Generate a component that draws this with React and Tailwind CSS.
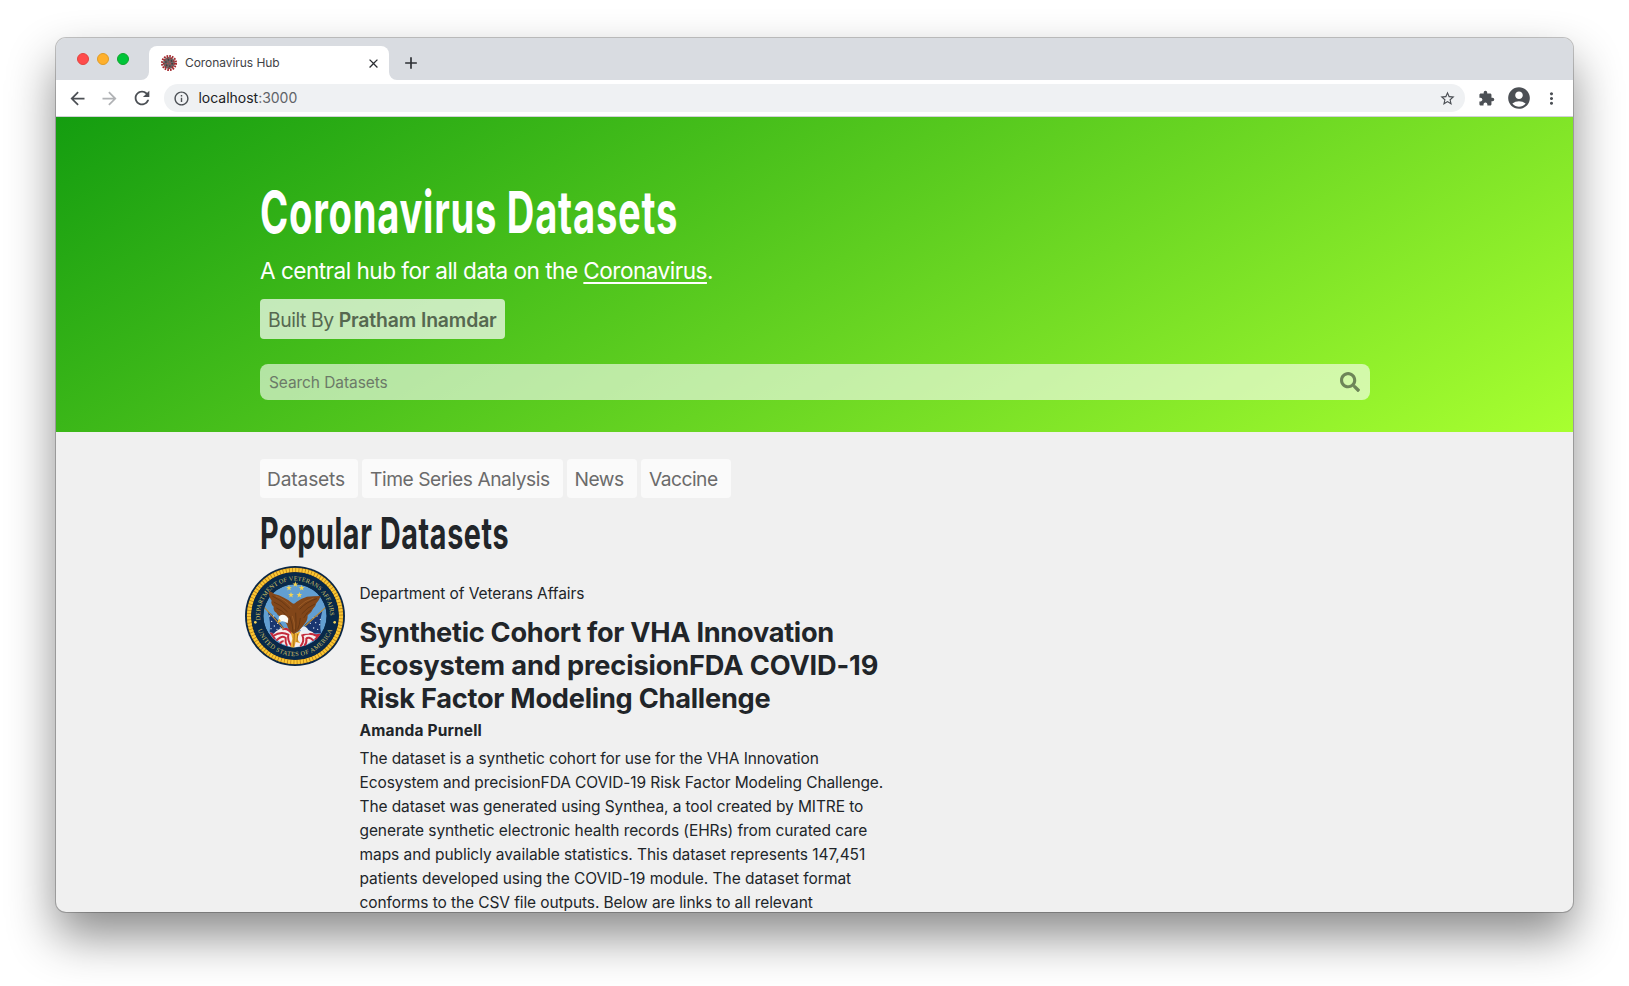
import React from "react";
import {
  MdAccountCircle, MdAdd, MdArrowBack, MdArrowForward, MdClose, MdExtension,
  MdInfoOutline, MdMoreVert, MdRefresh, MdStarBorder,
} from "react-icons/md";
import { FaSearch } from "react-icons/fa";

const description = [
  ["The dataset is a synthetic cohort for use for the VHA Innovation", "tracking-[-0.095px]"],
  ["Ecosystem and precisionFDA COVID-19 Risk Factor Modeling Challenge.", "tracking-[-0.094px]"],
  ["The dataset was generated using Synthea, a tool created by MITRE to", "tracking-[-0.098px]"],
  ["generate synthetic electronic health records (EHRs) from curated care", "tracking-[-0.086px]"],
  ["maps and publicly available statistics. This dataset represents 147,451", "tracking-[-0.059px]"],
  ["patients developed using the COVID-19 module. The dataset format", "tracking-[-0.04px]"],
  ["conforms to the CSV file outputs. Below are links to all relevant", "tracking-[-0.098px]"],
];

const tabs = [
  ["Datasets", "w-[98px] pl-[7px] tracking-[-0.16px]"],
  ["Time Series Analysis", "w-[201px] pl-[8px] tracking-[-0.45px]"],
  ["News", "w-[70px] pl-[7.5px] tracking-[-0.5px]"],
  ["Vaccine", "w-[90px] pl-[8px] tracking-[-0.5px]"],
];

const sealStars = [[151, 55], [132, 66], [170, 66], [138, 87], [163, 87]];
const flagStars = [
  [74, 150], [80, 166], [88, 180], [86, 150], [96, 190], [98, 172], [78, 188], [106, 186],
  [205, 156], [216, 150], [226, 160], [212, 170], [224, 176], [206, 186], [218, 190], [196, 172],
];

function Favicon() {
  return (
    <svg viewBox="0 0 32 32" className="size-4 shrink-0">
      <circle cx="16" cy="16" r="14" fill="none" stroke="#a3282d" strokeWidth="4" strokeDasharray="3.4 2.1" />
      <circle cx="16" cy="16" r="12" fill="#6d6061" />
      <circle cx="16" cy="16" r="10.6" fill="none" stroke="#a5292d" strokeWidth="3" strokeDasharray="3 4.4" />
      <circle cx="16" cy="16" r="6.4" fill="none" stroke="#413c3d" strokeWidth="3" strokeDasharray="3 3.7" />
      <circle cx="16" cy="16" r="3" fill="none" stroke="#b04a4c" strokeWidth="2.4" strokeDasharray="2.4 3.9" />
    </svg>
  );
}

function Seal() {
  return (
    <svg viewBox="0 0 300 300" className="size-[100px] shrink-0">
      <defs>
        <path id="arcTop" d="M46.4 166 A105 105 0 1 1 253.6 166" />
        <path id="arcBottom" d="M33 173 A119 119 0 0 0 267 173" />
        <clipPath id="disc"><circle cx="150" cy="150" r="95" /></clipPath>
      </defs>
      <circle cx="150" cy="150" r="150" fill="#0a2747" />
      <circle cx="150" cy="150" r="138" fill="none" stroke="#b8801c" strokeWidth="13" />
      <circle cx="150" cy="150" r="138" fill="none" stroke="#fbc733" strokeWidth="12" strokeDasharray="7.2 2.4" />
      <circle cx="150" cy="150" r="131" fill="#08294a" />
      <g fill="#d6c466" className="font-['Liberation_Serif',serif] font-normal" fontSize="19">
        <text textLength="344"><textPath href="#arcTop" startOffset="3" textLength="344">DEPARTMENT OF VETERANS AFFAIRS</textPath></text>
        <text textLength="290"><textPath href="#arcBottom" startOffset="20" textLength="290">UNITED STATES OF AMERICA</textPath></text>
      </g>
      <circle cx="31" cy="169" r="4" fill="#f0d25a" />
      <circle cx="269" cy="169" r="4" fill="#f0d25a" />
      <g clipPath="url(#disc)">
        <circle cx="150" cy="150" r="95" fill="#629fd2" />
        {/* flags */}
        <path d="M68 136 Q92 150 120 190 L102 216 Q84 198 74 198 Q78 168 68 136 Z" fill="#1a3670" />
        <path d="M232 136 Q206 152 178 178 L196 206 Q214 198 228 202 Q222 168 232 136 Z" fill="#1a3670" />
        <path d="M74 200 Q84 196 94 214 L88 222Z M228 204 Q214 200 202 214 L214 224Z" fill="#c32a3c" />
        {flagStars.map(([x, y]) => <circle key={`${x}-${y}`} cx={x} cy={y} r="2.1" fill="#dce6f2" />)}
        <path d="M84 206 Q104 182 124 186 L150 202 L180 190 Q208 196 214 212 Q192 240 150 244 Q106 240 84 206Z" fill="#f6eeee" />
        <g fill="none" stroke="#c32a3c" strokeWidth="6">
          <path d="M84 210 Q108 194 130 206 Q126 222 140 240" />
          <path d="M94 224 Q112 206 122 216 Q120 230 126 240" />
          <path d="M112 190 Q128 184 142 204" />
          <path d="M104 234 Q110 224 116 226" />
          <path d="M216 210 Q194 198 172 208 Q180 224 166 242" />
          <path d="M206 224 Q190 210 184 218 Q186 230 178 240" />
        </g>
        {/* flag poles */}
        <path d="M58 124 L118 190 M242 124 L180 180" stroke="#b98a35" strokeWidth="3.5" />
        {/* talons and arrows */}
        <path d="M137 196 L152 202 L166 196 L156 218 L166 232 L152 228 L146 252 L136 244 L142 218Z" fill="#e9ae34" />
        <path d="M148 202 L146 242 M158 204 L156 228" stroke="#a86d17" strokeWidth="3" />
        {/* tail */}
        <path d="M164 190 Q172 176 186 186 L196 200 Q186 206 174 202Z" fill="#e8eef6" />
      </g>
      {/* wings and body */}
      <path d="M72 76 Q80 76 88 84 Q102 86 114 94 Q128 100 142 112 Q148 116 154 108 Q166 98 186 92 Q204 90 227 90 Q222 104 214 112 Q212 122 204 128 Q200 140 188 148 Q188 164 180 172 Q172 184 160 196 L146 204 Q130 194 126 176 Q120 166 112 152 Q98 150 94 140 Q84 134 86 122 Q76 112 80 104 Q70 92 72 76Z" fill="#824619" />
      <g fill="none" stroke="#5b300f" strokeWidth="2">
        <path d="M82 90 Q112 104 134 128 M86 108 Q108 116 128 138 M94 126 Q110 132 122 146" />
        <path d="M216 98 Q186 106 164 130 M210 114 Q188 122 170 144 M198 132 Q186 138 176 156" />
        <path d="M134 150 Q144 176 144 198 M152 140 Q154 170 152 196 M166 156 Q164 178 158 190" />
      </g>
      <g fill="none" stroke="#a7672e" strokeWidth="2">
        <path d="M92 90 Q120 100 140 124 M206 96 Q178 104 160 124 M142 150 Q150 172 148 190" />
      </g>
      {/* head */}
      <path d="M101 157 Q102 146 113 146 Q124 146 130 158 L128 172 Q118 166 112 166 Q106 166 104 170 Q101 164 101 157Z" fill="#fbfbf8" />
      <path d="M103 158 Q97 162 99 170 L108 166Z" fill="#f2bd35" />
      {sealStars.map(([x, y]) => (
        <path key={`${x}${y}`} transform={`translate(${x} ${y})`} fill="#f5d451"
          d="M0-9 2.2-2.8 8.6-2.8 3.5 1.1 5.3 7.3 0 3.6-5.3 7.3-3.5 1.1-8.6-2.8-2.2-2.8Z" />
      ))}
    </svg>
  );
}

function Chrome() {
  return (
    <header className="shrink-0">
      <div className="flex h-[42px] items-end bg-[#d9dce1]">
        <div className="flex w-[93px] gap-2 self-center pl-[21px]">
          <span className="size-3 rounded-full border border-[#e2443f] bg-[#ff4b4b]" />
          <span className="size-3 rounded-full border border-[#e09c25] bg-[#ffb02c]" />
          <span className="size-3 rounded-full border border-[#10a52c] bg-[#00c539]" />
        </div>
        <div className="relative flex h-[34px] w-[240px] items-center rounded-t-lg bg-white pl-[12px] pr-[8px]">
          <svg viewBox="0 0 8 8" className="absolute bottom-0 -left-2 size-2"><path d="M8 0v8H0a8 8 0 0 0 8-8" fill="#fff" /></svg>
          <svg viewBox="0 0 8 8" className="absolute bottom-0 -right-2 size-2"><path d="M0 0v8h8a8 8 0 0 1-8-8" fill="#fff" /></svg>
          <Favicon />
          <span className="ml-2 grow text-xs tracking-[-0.06px] text-[#3f4246]">Coronavirus Hub</span>
          <MdClose className="size-[15px] text-[#2c2f33]" />
        </div>
        <MdAdd className="mb-[7px] ml-[12px] size-5 text-[#2c2f33]" />
      </div>
      <div className="flex h-[37px] items-center border-b border-[#d0d2d6] bg-white pr-[12px] text-[#4c5055]">
        <MdArrowBack className="ml-[11px] size-[21px]" />
        <MdArrowForward className="ml-[11px] size-[21px] text-[#b0b2b5]" />
        <MdRefresh className="ml-[11px] size-[22px]" />
        <div className="ml-[11px] flex h-7 grow items-center rounded-full bg-[#eff1f3] pr-[9px] pl-[9px]">
          <MdInfoOutline className="size-[17px]" />
          <span className="ml-[8.5px] grow text-sm tracking-[-0.02px] text-[#202124]">
            localhost<span className="text-[#5f6368]">:3000</span>
          </span>
          <MdStarBorder className="size-[17px]" />
        </div>
        <MdExtension className="ml-[13px] size-[17px]" />
        <MdAccountCircle className="ml-[11px] size-[26px]" />
        <MdMoreVert className="ml-[10px] size-[19px]" />
      </div>
    </header>
  );
}

export default function App() {
  return (
    <div className="h-[986px] w-[1629px] overflow-hidden bg-white pt-[38px] pl-[56px] font-[Inter,sans-serif]">
      <div className="flex h-[874px] w-[1517px] flex-col overflow-hidden rounded-[10px] bg-[#f0f0f0] shadow-[0_0_0_1px_rgba(0,0,0,0.22),0_24px_48px_rgba(0,0,0,0.46)]">
        <Chrome />
        <section className="h-[315px] shrink-0 bg-[linear-gradient(150deg,#149d10,#a8ff30)] pt-[63px] pl-[204px] text-white">
          <h1 className="h-16 origin-left scale-x-[0.66] text-[57.8px] leading-16 font-bold tracking-[1.15px] whitespace-nowrap">Coronavirus Datasets</h1>
          <p className="mt-[9px] text-[22.6px] leading-9 tracking-[-0.53px]">
            A central hub for all data on the <a className="underline decoration-2 underline-offset-[3px]">Coronavirus</a>.
          </p>
          <div className="mt-[10px] flex h-10 w-[245px] items-center rounded bg-white/70 pt-[3px] pl-[8px] text-[19.4px] whitespace-pre text-[#566850]">
            <span className="tracking-[-0.45px]">Built By </span>
            <strong className="font-semibold tracking-[-0.14px]">Pratham Inamdar</strong>
          </div>
          <div className="mt-[25px] flex h-9 w-[1110px] items-center justify-between rounded-lg bg-white/60 pr-[10px] pl-[9px]">
            <span className="pt-px text-[15.5px] tracking-[-0.08px] text-[#6c7a68]">Search Datasets</span>
            <FaSearch className="mb-px size-5 text-[#6d8558]" />
          </div>
        </section>
        <main className="pt-[27px] pl-[204px] text-[#212529]">
          <nav className="flex gap-1">
            {tabs.map(([label, cls]) => (
              <a key={label} className={`flex h-[39px] items-center rounded bg-[#fafafa] pt-[2px] text-[19.2px] whitespace-nowrap text-[#6b6b6b] ${cls}`}>{label}</a>
            ))}
          </nav>
          <h2 className="mt-[9px] h-[52px] origin-left scale-x-[0.66] text-[43.5px] leading-[52px] font-bold tracking-[0.95px] whitespace-nowrap">Popular Datasets</h2>
          <div className="-ml-[15px] mt-[7px] flex">
            <Seal />
            <article className="ml-[14.5px] pt-[16px] text-[15.5px] leading-6 whitespace-nowrap">
              <p className="tracking-[-0.08px]">Department of Veterans Affairs</p>
              <h3 className="mt-[10px] text-[27.2px] leading-[33px] font-bold">
                <span className="block tracking-[-0.29px]">Synthetic Cohort for VHA Innovation</span>
                <span className="block tracking-[-0.138px]">Ecosystem and precisionFDA COVID-19</span>
                <span className="block tracking-[-0.25px]">Risk Factor Modeling Challenge</span>
              </h3>
              <p className="mt-[4px] font-bold tracking-[0.16px]">Amanda Purnell</p>
              <p className="mt-[4px]">
                {description.map(([line, cls]) => <span key={line} className={`block ${cls}`}>{line}</span>)}
              </p>
            </article>
          </div>
        </main>
      </div>
    </div>
  );
}
